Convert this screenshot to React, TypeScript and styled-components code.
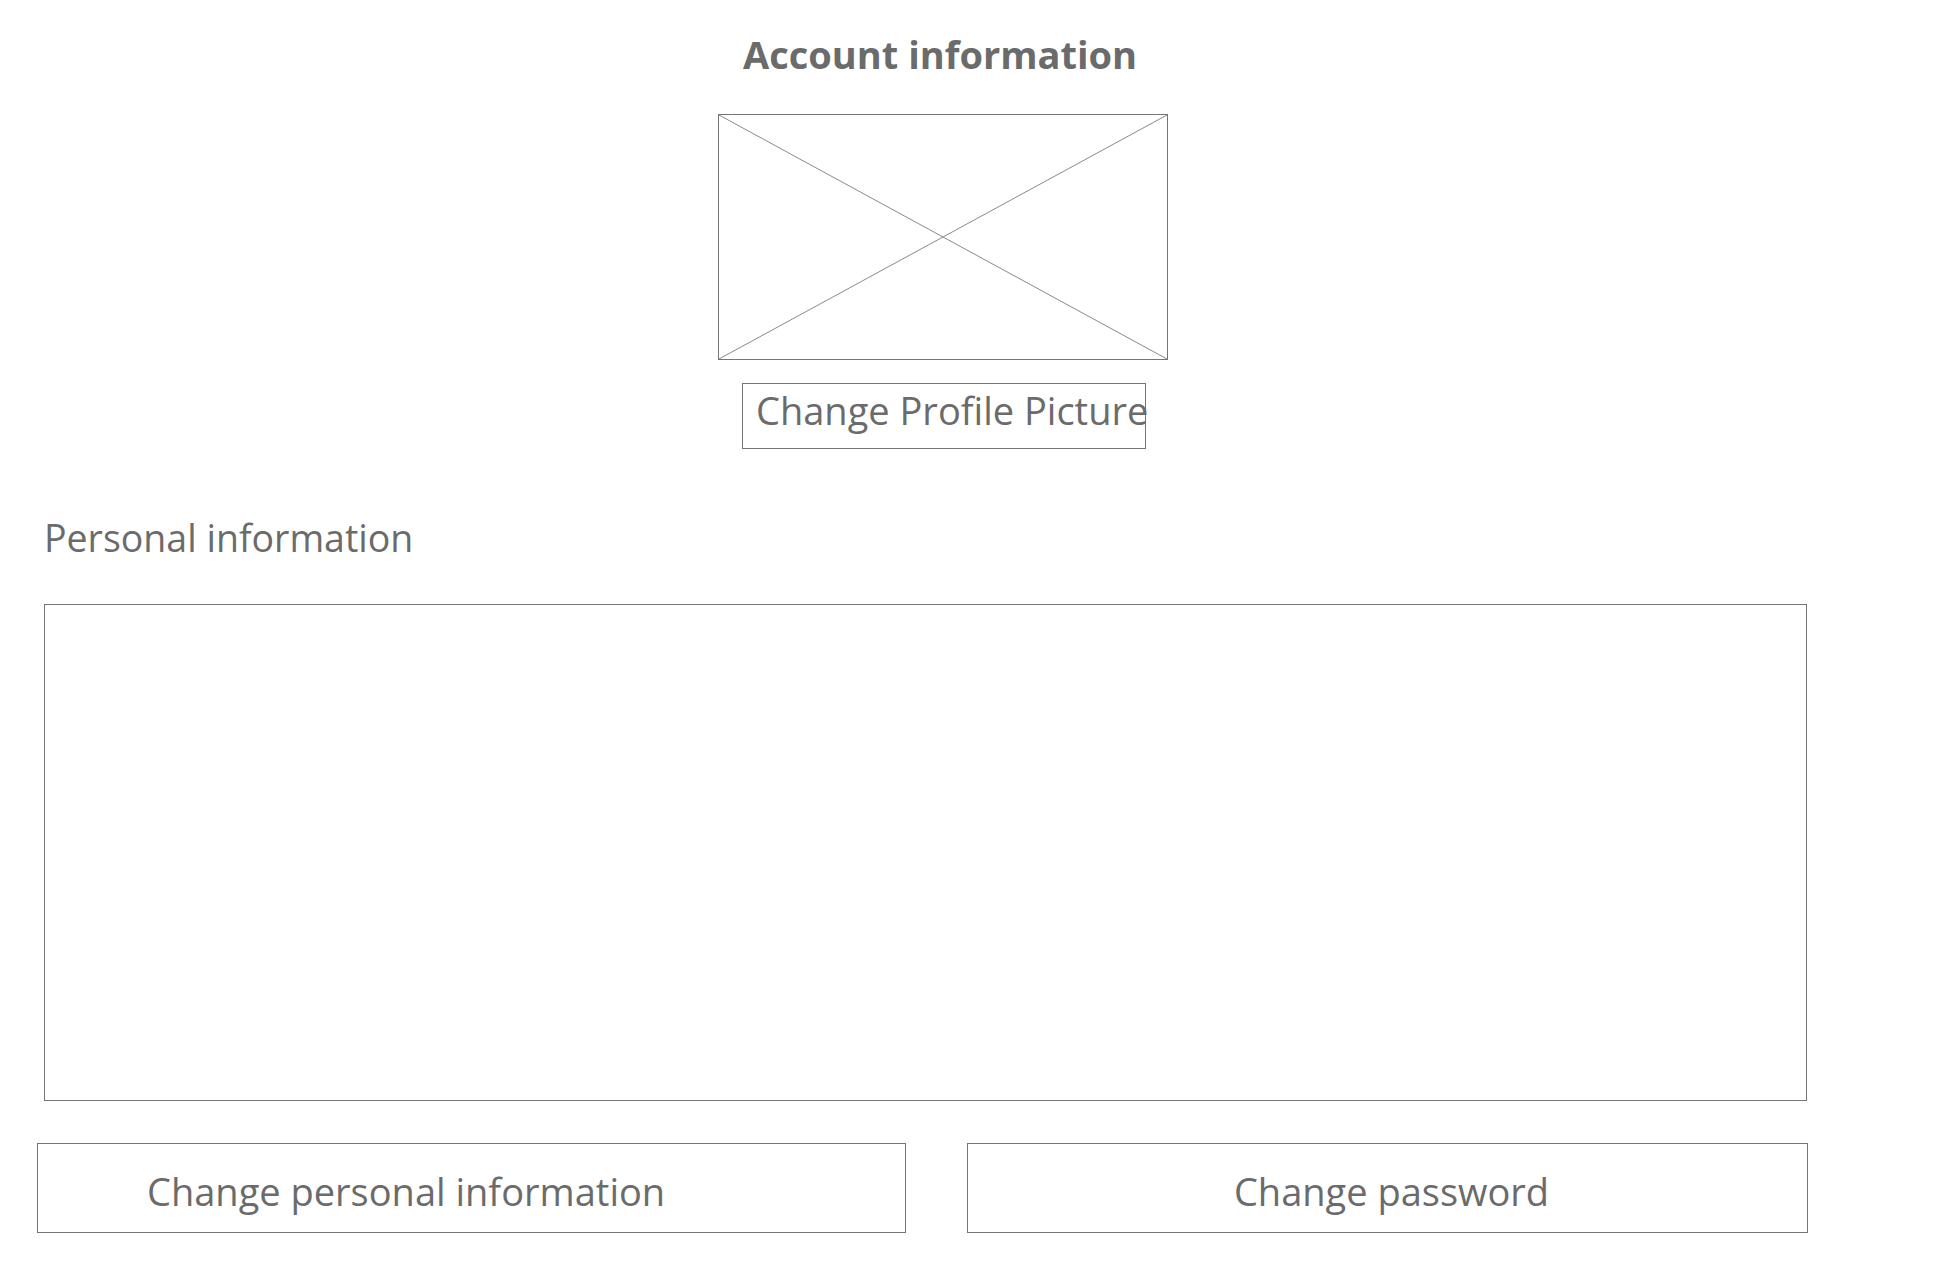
import React from "react";
import styled, { createGlobalStyle } from "styled-components";

const GlobalStyle = createGlobalStyle`
  html, body {
    margin: 0;
    padding: 0;
    background: #ffffff;
  }
  body {
    font-family: "Open Sans", "Noto Sans", "Liberation Sans", sans-serif;
    color: #6b6b6b;
  }
  * { box-sizing: border-box; }
`;

const Page = styled.div`
  width: 1933px;
  min-height: 1274px;
  display: flex;
  flex-direction: column;
`;

const Header = styled.header`
  display: flex;
  flex-direction: column;
  width: 450px;
  margin-left: 718px;
  padding-top: 29px;
`;

const Title = styled.h1`
  margin: 0 0 0 25px;
  font-size: 38px;
  font-weight: 700;
  line-height: 1.362;
  color: #6b6b6b;
  white-space: nowrap;
`;

const Picture = styled.div`
  margin-top: 33px;
  width: 450px;
  height: 246px;
  border: 1px solid #757575;
  display: flex;
`;

const PictureCross = styled.svg`
  width: 100%;
  height: 100%;
  display: block;
`;

const ProfileButton = styled.button`
  margin: 23px 0 0 24px;
  width: 404px;
  height: 66px;
  border: 1px solid #757575;
  background: #ffffff;
  padding: 1px 0 10px 13px;
  display: flex;
  align-items: flex-start;
  font-family: "Open Sans", "Noto Sans", sans-serif;
  font-size: 38px;
  line-height: 1.362;
  color: #6b6b6b;
  white-space: nowrap;
  overflow: visible;
  cursor: pointer;
`;

const Section = styled.section`
  display: flex;
  flex-direction: column;
  padding-left: 37px;
  margin-top: 63px;
`;

const SectionLabel = styled.h2`
  margin: 0 0 0 7px;
  font-size: 37.5px;
  font-weight: 400;
  line-height: 1.362;
  color: #6b6b6b;
`;

const InfoBox = styled.div`
  margin: 41px 0 0 7px;
  width: 1763px;
  height: 497px;
  border: 1px solid #757575;
`;

const ButtonRow = styled.div`
  display: flex;
  gap: 61px;
  margin-top: 42px;
`;

const ActionButton = styled.button<{ $width: number; $centered?: boolean }>`
  width: ${(p) => p.$width}px;
  height: 90px;
  border: 1px solid #757575;
  background: #ffffff;
  display: flex;
  align-items: center;
  justify-content: ${(p) => (p.$centered ? "center" : "flex-start")};
  padding: 8px 0 0 ${(p) => (p.$centered ? "8px" : "109px")};
  font-family: "Open Sans", "Noto Sans", sans-serif;
  font-size: 38px;
  line-height: 1.362;
  color: #6b6b6b;
  white-space: nowrap;
  cursor: pointer;
`;

export default function App() {
  return (
    <>
      <GlobalStyle />
      <Page>
        <Header>
          <Title>Account information</Title>
          <Picture>
            <PictureCross viewBox="0 0 100 100" preserveAspectRatio="none">
              <line x1="0" y1="0" x2="100" y2="100" stroke="#8a8a8a" strokeWidth="1" vectorEffect="non-scaling-stroke" />
              <line x1="100" y1="0" x2="0" y2="100" stroke="#8a8a8a" strokeWidth="1" vectorEffect="non-scaling-stroke" />
            </PictureCross>
          </Picture>
          <ProfileButton>Change Profile Picture</ProfileButton>
        </Header>
        <Section>
          <SectionLabel>Personal information</SectionLabel>
          <InfoBox />
          <ButtonRow>
            <ActionButton $width={869}>Change personal information</ActionButton>
            <ActionButton $width={841} $centered>
              Change password
            </ActionButton>
          </ButtonRow>
        </Section>
      </Page>
    </>
  );
}
